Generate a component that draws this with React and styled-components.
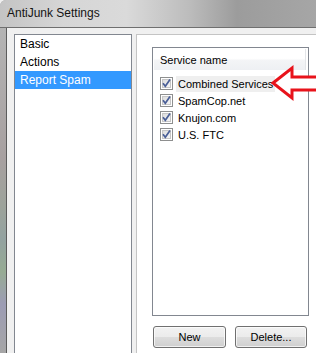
import React from 'react';
import styled, { createGlobalStyle } from 'styled-components';

const GlobalStyle = createGlobalStyle`
  html, body {
    margin: 0;
    padding: 0;
    background: #f0f0f0;
  }
  body {
    font-family: 'Liberation Sans', Arial, sans-serif;
    font-size: 11px;
    color: #000;
  }
`;

const Window = styled.div`
  position: relative;
  width: 316px;
  height: 353px;
  overflow: hidden;
  display: flex;
  flex-direction: column;
  background: #a9a9a9;
  border-top-left-radius: 6px;
`;

const TitleBar = styled.div`
  height: 28px;
  flex: none;
  display: flex;
  align-items: center;
  padding-left: 7px;
  background: linear-gradient(
    90deg,
    #c4c4c4 0%,
    #d6d6d6 20%,
    #dadada 40%,
    #bcbcbc 60%,
    #9c9c9c 75%,
    #a6a6a6 100%
  );
  border-bottom: 1px solid #6f6f6f;
  box-sizing: border-box;
  .title {
    font-size: 12px;
    color: #141414;
    padding-bottom: 1px;
  }
`;

const Body = styled.div`
  flex: 1;
  display: flex;
  min-height: 0;
`;

const Frame = styled.div`
  width: 6px;
  flex: none;
  background: linear-gradient(
    180deg,
    #b4b4b4 0%,
    #a7a0a0 40%,
    #9da39b 55%,
    #93a2a0 65%,
    #96ab93 75%,
    #9c9cb4 85%,
    #a6a6a6 100%
  );
  border-right: 1px solid #5c5c5c;
`;

const Client = styled.div`
  flex: 1;
  display: flex;
  gap: 4px;
  padding: 6px 0 0 7px;
  background: #f0f0f0;
  min-width: 0;
`;

const NavList = styled.ul`
  list-style: none;
  margin: 0;
  padding: 0;
  width: 116px;
  height: 340px;
  flex: none;
  background: #fff;
  border: 1px solid #828790;
`;

const NavItem = styled.li`
  height: 18px;
  line-height: 18px;
  padding-left: 5px;
  font-size: 12px;
  white-space: nowrap;
  background: ${p => (p.$active ? '#3399ff' : 'transparent')};
  color: ${p => (p.$active ? '#fff' : '#000')};
`;

const Panel = styled.div`
  width: 190px;
  flex: none;
  display: flex;
  flex-direction: column;
  gap: 10px;
  padding: 12px 0 0 15px;
  background: #fff;
  border: 1px solid #c4c4c4;
  border-right: none;
  border-bottom: none;
  box-sizing: border-box;
`;

const ListView = styled.div`
  width: 157px;
  height: 269px;
  flex: none;
  border: 1px solid #828790;
  box-sizing: border-box;
  background: #fff;
`;

const Header = styled.div`
  height: 21px;
  margin: 1px 2px 5px 1px;
  padding-left: 6px;
  display: flex;
  align-items: center;
  background: linear-gradient(#ffffff 0%, #ffffff 45%, #f3f4f6 55%, #eef0f3 100%);
  border-right: 1px solid #e3e5e8;
  color: #000;
`;

const Row = styled.div`
  height: 17px;
  display: flex;
  align-items: center;
  padding-left: 7px;
  gap: 3px;
`;

const RowLabel = styled.span`
  padding: 2px 2px 2px 2px;
  white-space: nowrap;
  background: ${p => (p.$selected ? '#efefef' : 'transparent')};
`;

const Buttons = styled.div`
  display: flex;
  gap: 9px;
  padding-left: 1px;
`;

const Button = styled.button`
  width: ${p => p.$w || 73}px;
  height: 22px;
  padding: 0;
  font-family: 'Liberation Sans', Arial, sans-serif;
  font-size: 11px;
  color: #000;
  border: 1px solid #707070;
  border-radius: 3px;
  background: linear-gradient(#f2f2f2 0%, #ebebeb 50%, #dddddd 50%, #cfcfcf 100%);
  box-shadow: inset 0 0 0 1px rgba(255, 255, 255, 0.7);
`;

const Arrow = styled.svg`
  position: absolute;
  left: 268px;
  top: 64px;
`;

const CheckBox = () => (
  <svg width="13" height="13" viewBox="0 0 13 13">
    <defs>
      <linearGradient id="cbg" x1="0" y1="0" x2="1" y2="1">
        <stop offset="0" stopColor="#dcdcdc" />
        <stop offset="1" stopColor="#f6f6f6" />
      </linearGradient>
    </defs>
    <rect x="0.5" y="0.5" width="12" height="12" fill="#fff" stroke="#8e8f8f" />
    <rect x="2.5" y="2.5" width="8" height="8" fill="url(#cbg)" stroke="#c6c6c6" />
    <path d="M3 6.2 L5.3 9.2 L10 2.6" fill="none" stroke="#4a5f97" strokeWidth="1.7" />
  </svg>
);

const services = ['Combined Services', 'SpamCop.net', 'Knujon.com', 'U.S. FTC'];

const App = () => (
  <Window>
    <GlobalStyle />
    <TitleBar>
      <span className="title">AntiJunk Settings</span>
    </TitleBar>
    <Body>
      <Frame />
      <Client>
        <NavList>
          <NavItem>Basic</NavItem>
          <NavItem>Actions</NavItem>
          <NavItem $active>Report Spam</NavItem>
        </NavList>
        <Panel>
          <ListView>
            <Header>Service name</Header>
            {services.map((s, i) => (
              <Row key={s}>
                <CheckBox />
                <RowLabel $selected={i === 0}>{s}</RowLabel>
              </Row>
            ))}
          </ListView>
          <Buttons>
            <Button>New</Button>
            <Button $w={72}>Delete...</Button>
          </Buttons>
        </Panel>
      </Client>
    </Body>
    <Arrow width="60" height="40" viewBox="0 0 60 40">
      <path
        d="M5 19 L24 4 L24 13 L60 13 L60 26 L24 26 L24 34 Z"
        fill="#fff"
        stroke="#e8131b"
        strokeWidth="3"
        strokeLinejoin="miter"
      />
    </Arrow>
  </Window>
);

export default App;
